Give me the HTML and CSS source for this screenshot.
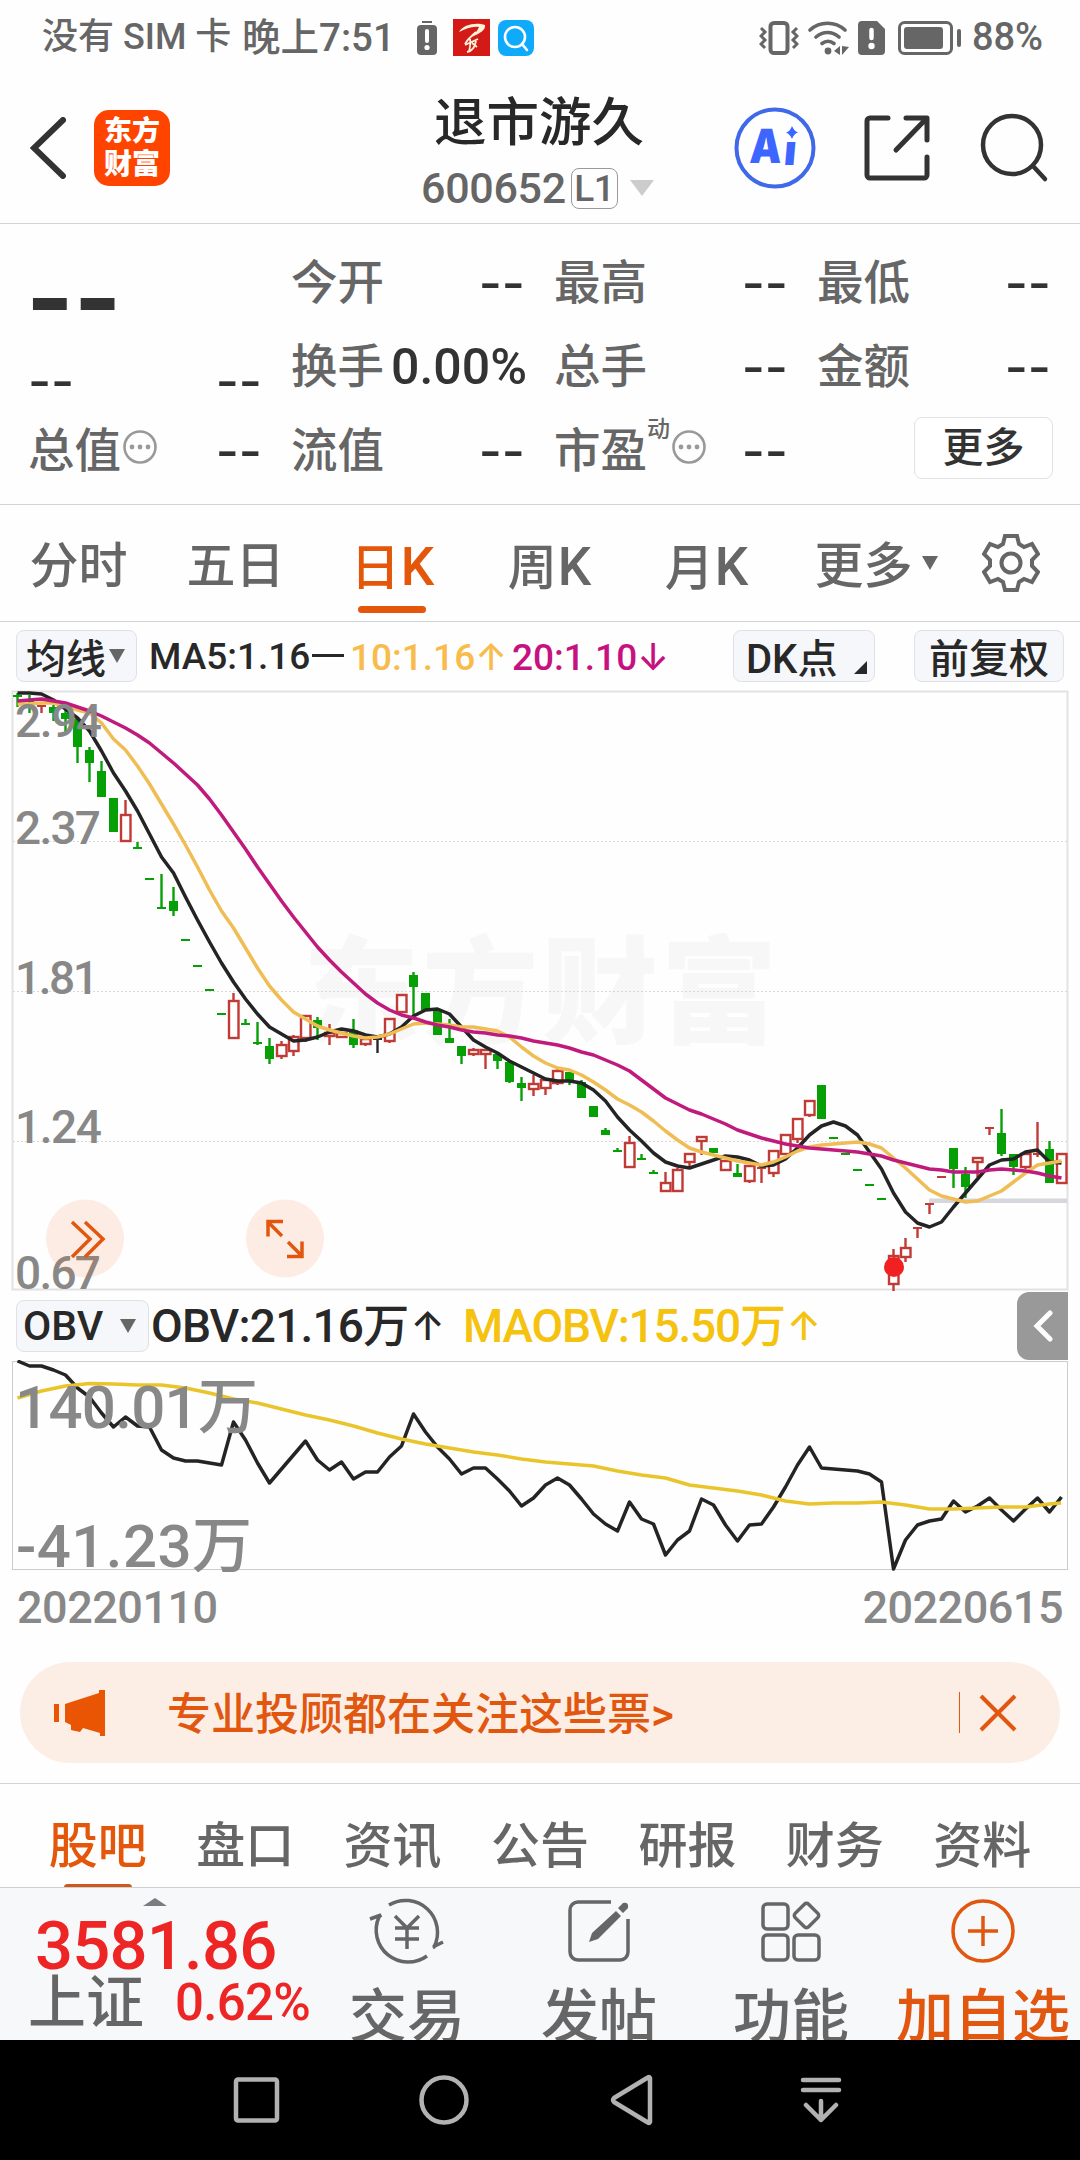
FILE: index.html
```html
<!DOCTYPE html>
<html lang="zh-CN">
<head>
  <meta charset="UTF-8" />
  <title>退市游久 600652</title>
  <link rel="stylesheet" href="styles.css">
</head>
<body>
  <div class="status-bar">
    <span class="carrier">没有 SIM 卡</span>
    <span class="clock">晚上7:51</span>
    <svg class="st-battery-low" width="20" height="34" viewBox="0 0 20 34"><path d="M5 1h10" stroke="#666" stroke-width="2"/><rect x="0" y="4" width="20" height="30" rx="4" fill="#666"/><path d="M10 10v10" stroke="#fff" stroke-width="4" stroke-linecap="round"/><circle cx="10" cy="26.500" r="2.600" fill="#fff"/></svg>
    <svg class="st-red" width="37" height="37" viewBox="0 0 37 37"><rect width="37" height="37" fill="#d41a17"/><path d="M6 13C10 5 24 3 32 6c1 5-5 8-13 12 3-4 6-7 7-10-7-1-13 2-20 5z" fill="#fff3d8"/><path d="M23 13C19 17 16 18 12 25M17 20c1 4 0 8-1 13M12 26l13-6M14 33c6-1 8-5 9-11M19 24l5 4" stroke="#fff3d8" stroke-width="1.800" fill="none"/></svg>
    <svg class="st-blue" width="36" height="36" viewBox="0 0 36 36"><rect width="36" height="36" rx="8" fill="#10aafb"/><circle cx="17" cy="17" r="10" fill="none" stroke="#fff" stroke-width="2.600"/><path d="M24 24l5 6" stroke="#fff" stroke-width="2.600" stroke-linecap="round"/></svg>
    <div class="status-right">
      <svg width="40" height="34" viewBox="0 0 40 34" fill="none" stroke="#666"><rect x="11.500" y="2" width="17" height="30" rx="3.500" stroke-width="4"/><path d="M2 7l4 4-4 4 4 4-4 4 4 4M38 7l-4 4 4 4-4 4 4 4-4 4" stroke-width="3"/></svg>
      <svg class="st-wifi" width="41" height="34" viewBox="0 0 41 34" fill="none" stroke="#666" stroke-width="3.600" stroke-linecap="round"><path d="M2 9c10-9 25-9 35 0M8 16c7-6 16-6 23 0M14 22.500c4-3 8-3 12 0"/><circle cx="20" cy="30" r="3.400" fill="#666" stroke="none"/><path d="M32 25v9l-6-4zM34 25v9l7-8z" fill="#666" stroke="none"/></svg>
      <svg class="st-sim" width="27" height="34" viewBox="0 0 27 34"><path d="M4 0h15l8 8v22a4 4 0 0 1-4 4H4a4 4 0 0 1-4-4V4a4 4 0 0 1 4-4z" fill="#666"/><path d="M13.500 9v8" stroke="#fff" stroke-width="4.500" stroke-linecap="round"/><circle cx="13.500" cy="25" r="3.200" fill="#fff"/></svg>
      <svg class="st-power" width="63" height="34" viewBox="0 0 63 34"><rect x="1.500" y="1.500" width="52" height="31" rx="5" fill="none" stroke="#666" stroke-width="3"/><rect x="6" y="6" width="39" height="22" rx="3" fill="#666"/><rect x="59" y="8" width="4" height="18" rx="2" fill="#666"/></svg>
      <span class="percent">88%</span>
    </div>
  </div>

  <header class="header">
    <svg class="back" width="36" height="62" viewBox="0 0 36 62"><path d="M33 3L4 31l29 28" fill="none" stroke="#333" stroke-width="6" stroke-linecap="round"/></svg>
    <div class="logo"><span>东方</span><span>财富</span></div>
    <div class="title">
      <div class="name">退市游久</div>
      <div class="code">600652<span class="level">L1</span><i class="caret-light"></i></div>
    </div>
    <svg class="ai" width="82" height="82" viewBox="0 0 82 82"><circle cx="41" cy="41" r="38.500" fill="none" stroke="#3f69e8" stroke-width="4"/><text class="ai-text" transform="translate(15 56) skewX(-3)" textLength="32" lengthAdjust="spacingAndGlyphs">A</text><text class="ai-text ai-i" transform="translate(49 58) skewX(-5)">ı</text><path d="M58 19q2 5 6 6.500-4 1-6 6.500-2-5-6-6.500 4-1 6-6.500z" fill="#3c66ff"/></svg>
    <svg class="share" width="66" height="66" viewBox="0 0 66 66" fill="none" stroke="#333" stroke-width="5" stroke-linecap="round" stroke-linejoin="round"><path d="M24 3H6a3 3 0 0 0-3 3v54a3 3 0 0 0 3 3h54a3 3 0 0 0 3-3V42M42 3h21v22M62 4L32 35"/></svg>
    <svg class="search" width="70" height="70" viewBox="0 0 70 70" fill="none" stroke="#333" stroke-width="4.500" stroke-linecap="round"><circle cx="33" cy="32" r="29"/><path d="M54 53l12 13"/></svg>
  </header>

  <section class="quote">
    <div class="cell"><b class="big">--</b></div>
    <div class="cell"><span>今开</span><b>--</b></div>
    <div class="cell"><span>最高</span><b>--</b></div>
    <div class="cell"><span>最低</span><b>--</b></div>
    <div class="cell low"><b>--</b><b>--</b></div>
    <div class="cell"><span>换手</span><em>0.00%</em></div>
    <div class="cell"><span>总手</span><b>--</b></div>
    <div class="cell"><span>金额</span><b>--</b></div>
    <div class="cell"><span>总值</span><svg class="info" width="34" height="34" viewBox="0 0 34 34"><circle cx="17" cy="17" r="15.500" fill="none" stroke="#999" stroke-width="2.600"/><g fill="#999"><circle cx="9" cy="17" r="2.400"/><circle cx="17" cy="17" r="2.400"/><circle cx="25" cy="17" r="2.400"/></g></svg><b>--</b></div>
    <div class="cell"><span>流值</span><b>--</b></div>
    <div class="cell"><span>市盈</span><small>动</small><svg class="info" width="34" height="34" viewBox="0 0 34 34"><circle cx="17" cy="17" r="15.500" fill="none" stroke="#999" stroke-width="2.600"/><g fill="#999"><circle cx="9" cy="17" r="2.400"/><circle cx="17" cy="17" r="2.400"/><circle cx="25" cy="17" r="2.400"/></g></svg><b>--</b></div>
    <div class="cell end"><button class="more-btn">更多</button></div>
  </section>

  <nav class="periods">
    <a>分时</a>
    <a>五日</a>
    <a class="active">日<span class="k">K</span></a>
    <a>周<span class="k">K</span></a>
    <a>月<span class="k">K</span></a>
    <a>更多<i class="caret period-caret"></i></a>
    <svg class="gear" width="58" height="60" viewBox="-29 -30 58 60" fill="none" stroke="#666" stroke-width="4"><path d="M-6-27H6L8-19 13-16 21-19 27-9 21-3V3L27 9 21 19 13 16 8 19 6 27H-6L-8 19-13 16-21 19-27 9-21 3V-3L-27-9-21-19-13-16-8-19z"/><circle r="9.500"/></svg>
  </nav>

  <div class="ma-bar">
    <button class="tag ma-btn">均线<i class="caret"></i></button>
    <span class="ma5">MA5:1.16<i class="flat"></i></span>
    <span class="ma10">10:1.16<i class="arrow">↑</i></span>
    <span class="ma20">20:1.10<i class="arrow">↓</i></span>
    <button class="tag dk-btn">DK点<i class="corner"></i></button>
    <button class="tag fq-btn">前复权</button>
  </div>

  <svg class="k-chart" id="kChart" width="1080" height="602" viewBox="0 690 1080 602">
    <text class="watermark" x="303" y="1034" textLength="474">东方财富</text>
    <path class="grid" d="M13 841.500H1067M13 991.500H1067M13 1141.500H1067"/>
    <rect x="12.500" y="691.500" width="1055" height="598" fill="none" stroke="#e2e2e2" stroke-width="2"/>
    <rect x="929" y="1198.500" width="138" height="4.500" fill="#d5d7dc"/>
    <g id="candles"></g>
    <g id="maLines"></g>
    <circle cx="894" cy="1267" r="10" fill="#f22121"/>
    <g class="axis">
      <text x="15" y="737" textLength="87">2.94</text>
      <text x="15" y="844" textLength="86">2.37</text>
      <text x="15" y="994" textLength="84">1.81</text>
      <text x="15" y="1143" textLength="87">1.24</text>
      <text x="15" y="1289" textLength="86">0.67</text>
    </g>
    <g fill="#f7691d" fill-opacity=".12"><circle cx="85" cy="1238.500" r="39"/><circle cx="285" cy="1238.500" r="39"/></g>
    <path d="M72 1222l18 17-18 18M85 1222l18 17-18 18M283 1221.500h-15v15M268 1222l14 14M287 1256.500h15v-15M302 1256l-14-14" fill="none" stroke="#e2570f" stroke-width="3.500"/>
  </svg>

  <div class="obv-bar">
    <button class="tag obv-btn">OBV<i class="caret"></i></button>
    <span class="obv">OBV:21.16万<i class="arrow">↑</i></span>
    <span class="maobv">MAOBV:15.50万<i class="arrow">↑</i></span>
    <div class="drawer"><svg width="20" height="32" viewBox="0 0 20 32"><path d="M17 3L4 16l13 13" fill="none" stroke="#fff" stroke-width="5" stroke-linecap="round"/></svg></div>
  </div>

  <svg class="obv-chart" width="1080" height="212" viewBox="0 1360 1080 212">
    <rect x="12.500" y="1361.500" width="1055" height="208" fill="none" stroke="#ccc"/>
    <g id="obvLines"></g>
    <g class="axis axis-lg">
      <text x="15" y="1428" textLength="243">140.01万</text>
      <text x="16" y="1567" textLength="236">-41.23万</text>
    </g>
  </svg>
  <div class="dates"><span>20220110</span><span>20220615</span></div>

  <div class="promo">
    <svg class="horn" width="52" height="46" viewBox="0 0 52 46" fill="#ea5504"><path d="M0 14h5v18H0zM11 14L45 3V0h6v46h-5v-3l-17-5-3 4-9-2v-5l-6-3z"/></svg>
    <span class="promo-text">专业投顾都在关注这些票&gt;</span>
    <i class="promo-line"></i>
    <svg width="38" height="38" viewBox="0 0 38 38"><path d="M2 2l34 34M36 2L2 36" stroke="#e2570f" stroke-width="4"/></svg>
  </div>

  <nav class="sections">
    <a class="active">股吧</a>
    <a>盘口</a>
    <a>资讯</a>
    <a>公告</a>
    <a>研报</a>
    <a>财务</a>
    <a>资料</a>
  </nav>

  <footer class="toolbar">
    <div class="index">
      <i class="up"></i>
      <div class="index-value">3581.86</div>
      <div class="index-row"><span>上证</span><em>0.62%</em></div>
    </div>
    <div class="tool">
      <svg width="76" height="70" viewBox="-38 -35 76 70" fill="none" stroke="#666" stroke-width="3.500"><path d="M-18-26A32 32 0 0 1 27 16l-1 0 10-5M20 25A32 32 0 0 1-28-14l2-2-11 4M-12-15L0-3 12-15M-12-3H12M-12 8H12M0-3V18"/></svg>
      <span>交易</span>
    </div>
    <div class="tool">
      <svg width="76" height="70" viewBox="-38 -35 76 70" fill="none" stroke="#666" stroke-width="3.500"><path d="M12-29H-21a8 8 0 0 0-8 8V21a8 8 0 0 0 8 8H21a8 8 0 0 0 8-8V-12"/><path d="M-10 11l3-9L17-20l5 5L-1 8zM19-23l5-5q6-1 5 5l-5 5z" fill="#666" stroke="none"/></svg>
      <span>发帖</span>
    </div>
    <div class="tool">
      <svg width="76" height="70" viewBox="-38 -35 76 70" fill="none" stroke="#666" stroke-width="3.500"><rect x="-28" y="-27" width="25" height="25" rx="4"/><rect x="-28" y="4" width="25" height="25" rx="4"/><rect x="3" y="4" width="25" height="25" rx="4"/><rect x="6" y="-25" width="19" height="19" rx="3" transform="rotate(45 15.500 -15.500)"/></svg>
      <span>功能</span>
    </div>
    <div class="tool add">
      <svg width="76" height="70" viewBox="-38 -35 76 70" fill="none" stroke="#e2570f" stroke-width="3.500"><circle r="30"/><path d="M-15 0H15M0-15V15"/></svg>
      <span>加自选</span>
    </div>
  </footer>

  <div class="sys-nav">
    <svg width="1080" height="120" viewBox="0 0 1080 120" fill="none" stroke="#b2b2b2" stroke-width="4.500" stroke-linecap="round" stroke-linejoin="round"><rect x="236" y="39.500" width="41" height="41" rx="2"/><circle cx="444" cy="60" r="22.500"/><path d="M650 38v44q-1 2-3 0L614 62q-2-2 0-4L647 38q2-2 3 0zM803 40h36M803 50h36M821 61v19M806 65l15 15 15-15"/></svg>
  </div>

  <script src="chart.js"></script>
</body>
</html>
```
FILE: styles.css
```css
body {
  margin: 0;
  width: 1080px;
  height: 2160px;
  overflow: hidden;
  background: #fefefe;
  color: #282828;
  font-family: Roboto, "Noto Sans CJK SC", sans-serif;
  font-weight: 500;
}
i, em { font-style: normal; }
button {
  font: inherit;
  color: inherit;
  padding: 0;
}
svg { display: block; flex: none; }

/* status bar */
.status-bar {
  display: flex;
  align-items: center;
  height: 75px;
  padding-left: 42px;
  box-sizing: border-box;
  color: #666;
  font-size: 36px;
  line-height: 75px;
  white-space: nowrap;
}
.carrier { width: 200px; }
.clock { width: 175px; font-size: 38.5px; }
.st-red { margin-left: 16px; }
.st-blue { margin-left: 8px; }
.status-right {
  display: flex;
  align-items: center;
  margin: 0 36px 0 auto;
}
.st-wifi { margin-left: 9px; }
.st-sim { margin-left: 9px; }
.st-power { margin-left: 13px; }
.percent { width: 72px; margin-left: 11px; font-size: 38px; letter-spacing: -0.1px; }

/* header */
.header {
  display: flex;
  align-items: center;
  height: 149px;
  padding-bottom: 3px;
  box-sizing: border-box;
  border-bottom: 1px solid #d4d4d4;
}
.back { margin-left: 30px; }
.logo {
  display: flex;
  flex-direction: column;
  justify-content: center;
  width: 76px;
  height: 76px;
  margin-left: 28px;
  border-radius: 15px;
  background: #ff4400;
  color: #fff;
  font-size: 28px;
  font-weight: 900;
  line-height: 33px;
  text-align: center;
}
.title { width: 270px; margin-left: 234px; padding-top: 13px; text-align: center; }
.name { font-size: 52.5px; line-height: 68px; }
.code {
  display: flex;
  align-items: center;
  padding-left: 17px;
  color: #666;
  font-size: 43px;
  line-height: 62px;
  letter-spacing: -0.3px;
}
.level {
  width: 45px;
  height: 39px;
  margin-left: 5px;
  border: 1px solid #999;
  border-radius: 8px;
  font-size: 37px;
  line-height: 39px;
}
.caret-light {
  margin-left: 12px;
  border: 12px solid transparent;
  border-top: 16px solid #ccc;
  border-bottom: 0;
}
.ai { margin-left: 60px; }
.ai-text { font: 900 47px Inter, sans-serif; fill: #3c66ff; }
.ai-i { font-size: 42px; }
.share { margin-left: 48px; }
.search { margin-left: 49px; }

/* quote */
.quote {
  display: grid;
  grid-template-columns: repeat(4, 234px);
  grid-template-rows: repeat(3, 84px);
  column-gap: 29px;
  height: 281px;
  padding: 17px 26px 0 28px;
  box-sizing: border-box;
  border-bottom: 1px solid #d4d4d4;
}
.cell {
  display: flex;
  align-items: center;
  color: #666;
  font-size: 46.5px;
  line-height: 84px;
  white-space: nowrap;
}
.cell b {
  margin-left: auto;
  color: #333;
  font-family: Inter, sans-serif;
  font-size: 50px;
  font-weight: 500;
}
.cell .big {
  margin: 30px 0 0 -2px;
  font-size: 102px;
  font-weight: 700;
}
.cell.low { padding-top: 27px; height: 84px; box-sizing: border-box; line-height: 60px; }
.cell.low b:first-child { margin-left: 0; }
.cell em { margin-right: -2px; margin-left: auto; color: #333; font-size: 50px; }
.cell small { align-self: flex-start; margin-top: -21px; font-size: 23px; }
.cell .info { margin: -9px 0 0 2px; }
.cell.end { justify-content: flex-end; }
.more-btn {
  width: 139px;
  height: 62px;
  margin: -6px -2px 0 0;
  border: 1px solid #e2e2e2;
  border-radius: 8px;
  background: #fff;
  color: #333;
  font-size: 41px;
  line-height: 60px;
}

/* k line period tabs */
.periods {
  display: flex;
  align-items: center;
  height: 117px;
  box-sizing: border-box;
  border-bottom: 1px solid #d4d4d4;
}
.periods a {
  position: relative;
  width: 157px;
  height: 117px;
  color: #666;
  font-size: 49px;
  line-height: 124px;
  text-align: center;
}
.periods .k { margin-left: 1px; font-size: 53px; }
.periods .active, .sections .active { color: #e4570a; }
.periods .active::after {
  content: "";
  position: absolute;
  left: 44px;
  bottom: 9px;
  width: 68px;
  height: 7px;
  border-radius: 4px;
  background: #e4570a;
}
.caret {
  display: inline-block;
  border: 8px solid transparent;
  border-top: 14px solid #666;
  border-bottom: 0;
}
.period-caret { position: absolute; right: 4px; top: 51px; }
.gear { margin-left: 40px; }

/* indicator bars */
.ma-bar, .obv-bar {
  display: flex;
  align-items: center;
  height: 68px;
  padding-left: 16px;
  font-size: 37px;
  white-space: nowrap;
}
.tag {
  display: flex;
  align-items: center;
  box-sizing: border-box;
  height: 52px;
  border: 1px solid #dfe1e5;
  border-radius: 8px;
  background: #f6f7fa;
  font-size: 40px;
}
.ma-btn { width: 121px; padding-left: 9px; }
.ma-btn .caret { margin-left: 3px; }
.ma5 { width: 201px; margin-left: 12px; }
.flat {
  display: inline-block;
  width: 32px;
  height: 3px;
  margin-left: 2px;
  vertical-align: 12px;
  background: #282828;
}
.ma10 { width: 162px; color: #f7bc4c; }
.ma20 { width: 221px; color: #c61280; }
.arrow { font-family: Inter, sans-serif; font-weight: 500; }
.dk-btn { position: relative; width: 142px; padding-left: 12px; }
.corner {
  position: absolute;
  right: 7px;
  bottom: 7px;
  border-left: 13px solid transparent;
  border-bottom: 13px solid #282828;
}
.fq-btn { width: 150px; margin-left: 39px; justify-content: center; }

/* charts */
.watermark { font: 900 116px "Noto Sans CJK SC", sans-serif; fill: #f7f7f7; }
.grid { stroke: #d8d8d8; stroke-width: 1; stroke-dasharray: 2 2; }
.axis { font-size: 46px; fill: #888; }
.axis-lg { font-size: 60px; }
.obv-bar { height: 68px; font-size: 46px; line-height: 60px; }
.obv-btn { width: 133px; padding-left: 6px; font-size: 41px; }
.obv-btn .caret { margin-left: 17px; }
.obv, .maobv { margin-top: -1px; letter-spacing: -0.8px; }
.obv { width: 312px; margin-left: 2px; }
.obv-bar .arrow { margin-left: 2px; font-size: 40px; vertical-align: 2px; }
.maobv { color: #f4c20f; letter-spacing: -1.2px; }
.drawer {
  display: flex;
  align-items: center;
  width: 51px;
  height: 68px;
  margin: 0 12px 0 auto;
  border-radius: 12px 0 0 12px;
  background: #999;
}
.drawer svg { margin-left: 16px; }
.dates {
  display: flex;
  justify-content: space-between;
  height: 90px;
  padding: 0 17px;
  color: #888;
  font-size: 45px;
  line-height: 72px;
  letter-spacing: -0.5px;
}

/* promo strip */
.promo {
  display: flex;
  align-items: center;
  height: 101px;
  margin: 0 20px 20px;
  border-radius: 51px;
  background: #fceee5;
  color: #e2570f;
  font-size: 44px;
}
.horn { margin-left: 34px; }
.promo-text { margin: -4px 0 0 61px; }
.promo-line { width: 1px; height: 41px; margin: 0 19px 0 auto; background: #e2570f; }
.promo > svg:last-child { margin-right: 43px; }

/* section tabs */
.sections {
  display: flex;
  height: 103px;
  padding: 0 24px;
  overflow: hidden;
  border-top: 1px solid #d4d4d4;
}
.sections a {
  position: relative;
  flex: 1;
  color: #666;
  font-size: 49px;
  line-height: 125px;
  text-align: center;
}
.sections .active::after {
  content: "";
  position: absolute;
  left: 40px;
  top: 100px;
  width: 68px;
  height: 7px;
  border-radius: 4px;
  background: #cc5a1c;
}

/* bottom toolbar */
.toolbar {
  display: flex;
  height: 153px;
  box-sizing: border-box;
  overflow: hidden;
  border-top: 1px solid #d0d0d0;
  background: #f7f8fa;
  color: #666;
}
.index { width: 311px; }
.up {
  display: block;
  width: 0;
  margin: 10px 0 0 143px;
  border: 12px solid transparent;
  border-bottom: 8px solid #7b7c80;
  border-top: 0;
}
.index-value {
  height: 68px;
  margin-left: 35px;
  color: #ee2525;
  font-size: 67px;
  line-height: 80px;
  letter-spacing: -0.8px;
}
.index-row { display: flex; align-items: center; padding-left: 28px; line-height: 58px; }
.index-row span { width: 147px; font-size: 58px; }
.index-row em { color: #ee2525; font-size: 51px; letter-spacing: -0.7px; }
.tool {
  display: flex;
  flex-direction: column;
  align-items: center;
  width: 192px;
  padding-top: 8px;
  font-size: 58px;
  line-height: 72px;
  white-space: nowrap;
}
.tool span { margin-top: 15px; }
.add { color: #e2570f; }

.sys-nav { height: 120px; background: #000; }
```
FILE: chart.js
```js
// candle: [type, body top, body bottom, high, low]; g = down, r = up (hollow), k = flat
const candles = [
  ["g",695,697,693,707],["g",699,702,695,713],["r",705,707,705,713],["g",707,713,705,721],
  ["g",713,719,708,734],["g",719,747,719,763],["g",750,763,747,782],["g",771,797,761,797],
  ["g",798,832,798,832],["r",815,841,800,842],["g",847,849,842,849],["g",878,880,878,880],
  ["g",907,909,874,909],["g",901,911,887,916],["g",939,941,939,941],["g",965,967,965,967],
  ["g",989,991,989,991],["g",1013,1015,1013,1015],["r",1001,1038,993,1038],["g",1023,1025,1019,1025],
  ["g",1042,1044,1022,1045],["g",1046,1059,1038,1064],["r",1045,1056,1041,1059],["r",1037,1051,1035,1056],
  ["r",1016,1038,1016,1042],["g",1020,1028,1017,1040],["r",1033,1036,1024,1045],["r",1033,1037,1032,1038],
  ["g",1030,1045,1019,1048],["r",1039,1044,1037,1046],["k",1038,1040,1038,1053],["r",1019,1041,1019,1043],
  ["r",995,1012,995,1012],["g",975,987,972,1015],["g",993,1010,993,1010],["g",1011,1035,1009,1035],
  ["g",1038,1043,1019,1043],["g",1046,1056,1046,1064],["r",1050,1054,1048,1056],["r",1050,1054,1050,1069],
  ["g",1054,1061,1052,1069],["g",1062,1082,1062,1083],["g",1083,1088,1077,1101],["r",1084,1089,1075,1096],
  ["r",1080,1088,1078,1095],["r",1071,1083,1069,1085],["g",1072,1081,1072,1085],["g",1082,1098,1080,1098],
  ["g",1106,1117,1106,1117],["g",1130,1135,1128,1135],["g",1150,1152,1148,1152],["r",1143,1167,1136,1167],
  ["g",1158,1160,1154,1160],["g",1172,1174,1170,1174],["r",1183,1191,1172,1191],["r",1170,1191,1168,1191],
  ["r",1154,1162,1154,1166],["r",1137,1141,1137,1155],["g",1148,1153,1148,1153],["r",1161,1170,1160,1170],
  ["g",1173,1177,1164,1177],["r",1166,1181,1165,1183],["r",1167,1169,1167,1183],["r",1151,1173,1151,1177],
  ["r",1135,1154,1135,1154],["r",1119,1139,1119,1143],["r",1101,1115,1101,1117],["g",1085,1119,1085,1119],
  ["g",1137,1139,1137,1139],["g",1153,1155,1153,1155],["g",1169,1171,1169,1171],["g",1184,1186,1184,1186],
  ["g",1198,1200,1198,1200],["r",1256,1284,1249,1291],["r",1248,1257,1238,1262],["r",1227,1229,1227,1238],
  ["r",1203,1205,1203,1214],["r",1176,1178,1176,1178],["g",1148,1169,1148,1188],["g",1174,1187,1167,1198],
  ["r",1158,1162,1158,1177],["r",1127,1129,1127,1135],["g",1133,1154,1109,1156],["g",1154,1167,1154,1175],
  ["r",1154,1167,1154,1169],["r",1153,1155,1122,1157],["g",1149,1183,1141,1183],["r",1154,1183,1154,1183]
];

const ma5 = [693,693,694,700,709,718,731,751,773,791,811,834,857,873,897,920,942,963,982,999,1014,1027,1034,1041,1040,1037,1032,1029,1031,1035,1037,1034,1027,1016,1010,1009,1014,1027,1040,1047,1053,1061,1067,1073,1079,1081,1081,1083,1090,1101,1117,1130,1141,1153,1162,1166,1168,1164,1160,1156,1157,1160,1166,1165,1159,1148,1135,1126,1122,1126,1135,1152,1169,1193,1212,1223,1227,1222,1207,1193,1179,1165,1160,1159,1152,1150,1162,1163];
const ma10 = [704,704,703,703,706,710,713,723,739,750,766,784,804,824,845,867,890,911,928,948,968,986,1000,1012,1019,1026,1030,1033,1036,1038,1037,1034,1029,1024,1023,1024,1025,1027,1027,1029,1031,1037,1047,1056,1063,1068,1070,1075,1082,1090,1099,1105,1112,1121,1131,1140,1148,1152,1155,1158,1161,1163,1165,1162,1157,1151,1147,1145,1144,1143,1142,1144,1148,1158,1168,1179,1190,1196,1199,1202,1201,1196,1191,1182,1173,1165,1163,1161];
const ma20 = [701,700,699,701,703,707,711,716,722,728,735,743,753,763,774,785,799,815,832,849,867,884,901,917,932,947,960,972,983,994,1003,1010,1015,1018,1022,1025,1027,1030,1032,1033,1035,1036,1038,1041,1043,1045,1048,1052,1055,1060,1065,1071,1080,1089,1098,1104,1110,1114,1119,1124,1130,1134,1138,1141,1144,1146,1148,1149,1150,1151,1152,1154,1156,1160,1163,1166,1169,1170,1172,1172,1172,1170,1169,1170,1171,1173,1176,1178];
const obv = [1361,1366,1366,1370,1375,1388,1397,1413,1427,1417,1426,1427,1450,1458,1461,1461,1463,1465,1422,1440,1463,1483,1469,1455,1441,1460,1470,1462,1479,1472,1472,1457,1446,1414,1432,1447,1459,1474,1468,1468,1479,1491,1506,1498,1485,1478,1485,1499,1514,1524,1531,1502,1519,1524,1555,1540,1531,1499,1505,1525,1541,1525,1524,1507,1487,1465,1447,1468,1469,1470,1471,1474,1482,1569,1540,1525,1521,1519,1501,1512,1506,1498,1510,1521,1509,1498,1512,1497];
// every second day is enough for the slow line
const maObv = [1398,1391,1386,1383.5,1384,1385,1385,1388,1393,1399,1403,1409,1415,1420,1426,1433,1439,1444,1448,1452,1455,1459,1462,1464,1466,1471,1475,1478,1485,1488,1491,1495,1501,1504,1503,1503,1502,1505,1509,1509,1508,1507,1507,1504];

const colors = { g: "#06a006", r: "#c03a36", k: "#282828" };
const xAt = (i, step = 12) => 17.5 + i * step;

function line(ys, color, width, step) {
  const pts = ys.map((y, i) => xAt(i, step) + "," + y).join(" ");
  return `<polyline points="${pts}" fill="none" stroke="${color}" stroke-width="${width}" stroke-linejoin="round"/>`;
}

function candle([type, top, bottom, high, low], i) {
  const x = xAt(i);
  const c = colors[type];
  if (type === "r" && bottom - top > 2) {
    return `<path d="M${x} ${high}V${top}M${x} ${bottom}V${low}" stroke="${c}" stroke-width="2.4"/>
      <rect x="${x - 4.5}" y="${top}" width="9.5" height="${bottom - top}" fill="none" stroke="${c}" stroke-width="2.4"/>`;
  }
  return `<path d="M${x} ${high}V${low}" stroke="${c}" stroke-width="2.4"/>
    <rect x="${x - 4.5}" y="${top}" width="9" height="${bottom - top}" fill="${c}"/>`;
}

document.getElementById("candles").innerHTML = candles.map(candle).join("");
document.getElementById("maLines").innerHTML =
  line(ma5, "#242424", 3.5) + line(ma10, "#f0bd55", 3.5) + line(ma20, "#c01a7c", 3.5);
document.getElementById("obvLines").innerHTML =
  line(obv, "#242424", 3.5) + line(maObv, "#e9c52b", 3.5, 24);
document.getElementById("obvLines").innerHTML += '<path d="M1049 1504L1061 1503" stroke="#e9c52b" stroke-width="3.5"/>';
```
